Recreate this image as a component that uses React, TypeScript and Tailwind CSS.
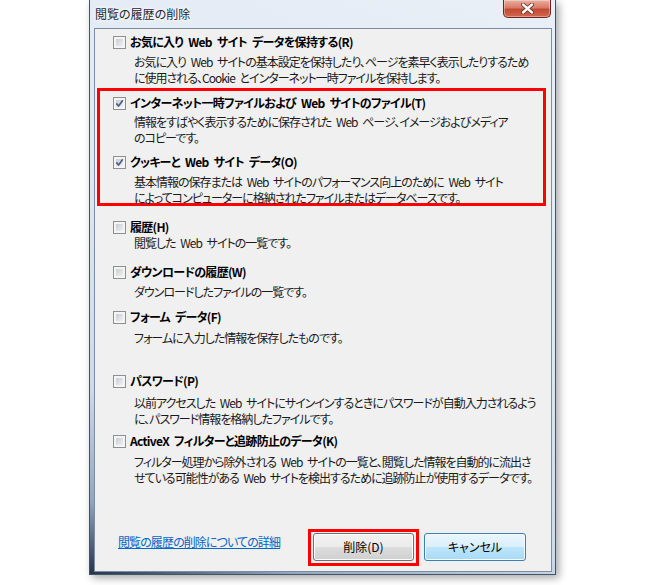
import React from "react";

type Item = {
  label: string;
  desc: string[];
  checked?: boolean;
  mt: string;
  dmt: string;
};

const Checkbox = ({ checked }: { checked?: boolean }) => (
  <div className="relative w-[13px] h-[13px] shrink-0 border border-[#8e8f8f] bg-[#f4f4f4] p-[2px]">
    <div className="w-full h-full bg-[linear-gradient(135deg,#c9ccd2,#eef0f2)]" />
    {checked && (
      <svg className="absolute left-[1px] top-[1px]" width="9" height="9" viewBox="0 0 9 9">
        <path d="M1.3 4.4 L3.6 7 L7.8 1.3" fill="none" stroke="#4b5f87" strokeWidth="1.7" />
      </svg>
    )}
  </div>
);

const Option = ({ item }: { item: Item }) => (
  <div className={item.mt}>
    <div className="flex items-center gap-[4px] h-[16px]">
      <Checkbox checked={item.checked} />
      <span className="font-bold text-[12px] leading-[16px] tracking-[-0.7px] [word-spacing:3px] whitespace-nowrap text-black">{item.label}</span>
    </div>
    <div className={`pl-[21px] ${item.dmt} text-[12px] leading-[16px] tracking-[-1px] [word-spacing:3px] text-[#1a1a1a]`}>
      {item.desc.map((line, i) => (
        <div key={i} className="whitespace-pre">{line}</div>
      ))}
    </div>
  </div>
);

const first: Item = {
  label: "お気に入り Web サイト データを保持する(R)",
  desc: [
    "お気に入り Web サイトの基本設定を保持したり、ページを素早く表示したりするため",
    "に使用される、Cookie とインターネット一時ファイルを保持します。",
  ],
  mt: "mt-[5px]",
  dmt: "mt-[4px]",
};

const boxed: Item[] = [
  {
    label: "インターネット一時ファイルおよび Web サイトのファイル(T)",
    desc: ["情報をすばやく表示するために保存された Web ページ、イメージおよびメディア", "のコピーです。"],
    checked: true,
    mt: "mt-[4px]",
    dmt: "mt-[3px]",
  },
  {
    label: "クッキーと Web サイト データ(O)",
    desc: [
      "基本情報の保存または Web サイトのパフォーマンス向上のために Web サイト",
      "によってコンピューターに格納されたファイルまたはデータベースです。",
    ],
    checked: true,
    mt: "mt-[8px]",
    dmt: "mt-[4px]",
  },
];

const rest: Item[] = [
  { label: "履歴(H)", desc: ["閲覧した Web サイトの一覧です。"], mt: "mt-[13px]", dmt: "mt-0" },
  { label: "ダウンロードの履歴(W)", desc: ["ダウンロードしたファイルの一覧です。"], mt: "mt-[13px]", dmt: "mt-[4px]" },
  { label: "フォーム データ(F)", desc: ["フォームに入力した情報を保存したものです。"], mt: "mt-[9px]", dmt: "mt-[5px]" },
  {
    label: "パスワード(P)",
    desc: [
      "以前アクセスした Web サイトにサインインするときにパスワードが自動入力されるよう",
      "に、パスワード情報を格納したファイルです。",
    ],
    mt: "mt-[27px]",
    dmt: "mt-[6px]",
  },
  {
    label: "ActiveX フィルターと追跡防止のデータ(K)",
    desc: [
      "フィルター処理から除外される Web サイトの一覧と、閲覧した情報を自動的に流出さ",
      "せている可能性がある Web サイトを検出するために追跡防止が使用するデータです。",
    ],
    mt: "mt-[6px]",
    dmt: "mt-[5px]",
  },
];

export default function App() {
  return (
    <div className="min-h-screen bg-white font-['Noto_Sans_CJK_JP','Noto_Sans_CJK_SC',sans-serif] [font-feature-settings:'palt']">
      <div className="ml-[89px] w-[467px] h-[575px] flex flex-col border-x border-b border-[#44556b] bg-[linear-gradient(200deg,#e9eff7_0%,#dfe8f3_45%,#cddaea_75%,#93a7be_90%,#24344a_100%)] shadow-[3px_3px_8px_rgba(0,0,0,0.35)]">
        <div className="h-[28px] shrink-0 flex items-start">
          <span className="ml-[5px] mt-[5px] text-[12px] leading-[18px] text-[#1b2533] [text-shadow:0_0_6px_#fff,0_0_3px_#fff]">
            閲覧の履歴の削除
          </span>
          <div className="ml-auto mr-[4px] w-[48px] h-[18px] rounded-b-[5px] border border-t-0 border-[#6e2418] bg-[linear-gradient(180deg,#eab0a2_0%,#d97a66_45%,#c24a34_55%,#d4684f_100%)] shadow-[inset_0_0_0_1px_rgba(255,255,255,0.35)] flex items-center justify-center">
            <svg width="15" height="11" viewBox="0 0 15 11">
              <path d="M3 1.5 L12 9.5 M12 1.5 L3 9.5" stroke="#5c2a22" strokeWidth="4" strokeLinecap="round" />
              <path d="M3 1.5 L12 9.5 M12 1.5 L3 9.5" stroke="#ffffff" strokeWidth="2.4" strokeLinecap="round" />
            </svg>
          </div>
        </div>
        <div className="ml-[4px] mr-[3px] h-[544px] shrink-0 border border-[#7d8da1] bg-[#f0f0f0] flex flex-col">
          <div className="pl-[18px]">
            <Option item={first} />
          </div>
          <div className="ml-[2px] mr-[5px] mt-[2px] h-[118px] border-[3px] border-[#ff0000] pl-[13px]">
            {boxed.map((item, i) => (
              <Option key={i} item={item} />
            ))}
          </div>
          <div className="pl-[18px]">
            {rest.map((item, i) => (
              <Option key={i} item={item} />
            ))}
          </div>
          <div className="mt-auto mb-[5px] flex items-start pl-[23px] pr-[25px]">
            <a className="mt-[5px] text-[12px] leading-[16px] tracking-[-0.9px] text-[#0066cc] underline whitespace-nowrap">
              閲覧の履歴の削除についての詳細
            </a>
            <div className="ml-auto border-[3px] border-[#ff0000] px-[2px] pt-[1px] pb-[2px]">
              <button className="w-[101px] h-[28px] rounded-[3px] border border-[#707070] bg-[linear-gradient(180deg,#f2f2f2_0%,#ebebeb_50%,#dddddd_50%,#cfcfcf_100%)] shadow-[inset_0_0_0_1px_#fcfcfc] text-[12px] text-black">
                削除(D)
              </button>
            </div>
            <button className="ml-[5px] mt-[4px] w-[102px] h-[28px] rounded-[3px] border border-[#3c7fb1] bg-[linear-gradient(180deg,#eaf6fd_0%,#d9f0fc_50%,#bee6fd_50%,#a7d9f5_100%)] shadow-[inset_0_0_0_1px_#f4fbff] text-[12px] text-black">
              キャンセル
            </button>
          </div>
        </div>
      </div>
    </div>
  );
}
